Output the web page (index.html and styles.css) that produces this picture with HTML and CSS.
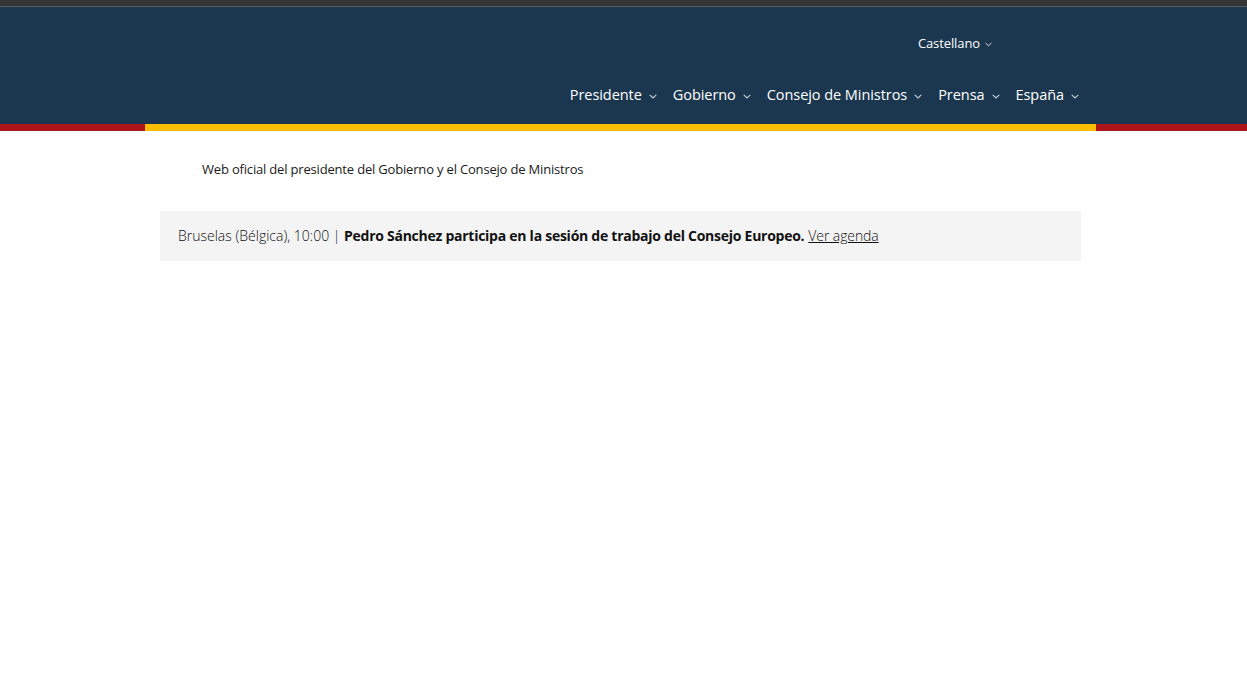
FILE: index.html
```html
<!DOCTYPE html>
<html lang="es">
<head>
<meta charset="utf-8">
<title>La Moncloa</title>
<link rel="stylesheet" href="styles.css">
</head>
<body>
<header class="site-header">
  <div class="topline"></div>
  <div class="navbar">
    <div class="container header-inner">
      <div class="lang">
        <span>Castellano</span>
        <svg class="chev chev-sm" viewBox="0 0 8 5" width="7" height="5"><path d="M0.7 0.8 L4 4 L7.3 0.8" fill="none" stroke="#dfe5ea" stroke-width="1.1"/></svg>
      </div>
      <nav class="mainnav">
        <a class="nav-item">Presidente <svg class="chev" viewBox="0 0 8 5" width="8" height="5"><path d="M0.7 0.8 L4 4 L7.3 0.8" fill="none" stroke="#c8d0d8" stroke-width="1.1"/></svg></a>
        <a class="nav-item">Gobierno <svg class="chev" viewBox="0 0 8 5" width="8" height="5"><path d="M0.7 0.8 L4 4 L7.3 0.8" fill="none" stroke="#c8d0d8" stroke-width="1.1"/></svg></a>
        <a class="nav-item">Consejo de Ministros <svg class="chev" viewBox="0 0 8 5" width="8" height="5"><path d="M0.7 0.8 L4 4 L7.3 0.8" fill="none" stroke="#c8d0d8" stroke-width="1.1"/></svg></a>
        <a class="nav-item">Prensa <svg class="chev" viewBox="0 0 8 5" width="8" height="5"><path d="M0.7 0.8 L4 4 L7.3 0.8" fill="none" stroke="#c8d0d8" stroke-width="1.1"/></svg></a>
        <a class="nav-item">España <svg class="chev" viewBox="0 0 8 5" width="8" height="5"><path d="M0.7 0.8 L4 4 L7.3 0.8" fill="none" stroke="#c8d0d8" stroke-width="1.1"/></svg></a>
      </nav>
    </div>
  </div>
  <div class="flag-stripe">
    <div class="red left"></div>
    <div class="yellow"></div>
    <div class="red right"></div>
  </div>
</header>
<main class="container">
  <p class="tagline">Web oficial del presidente del Gobierno y el Consejo de Ministros</p>
  <div class="agenda-bar">
    <span class="light">Bruselas (Bélgica), 10:00 | </span><strong>Pedro Sánchez participa en la sesión de trabajo del Consejo Europeo.</strong> <a class="agenda-link" href="#">Ver agenda</a>
  </div>
</main>
</body>
</html>
```
FILE: styles.css
```css
* { box-sizing: border-box; }
html, body { margin: 0; padding: 0; background: #fff; }
body { font-family: "Open Sans", "Noto Sans", sans-serif; color: #222; }

.container { width: 921px; margin-left: 160px; }

.topline { height: 7px; background: #353535; border-bottom: 1px solid #5b5b5b; }

.navbar { background: #1b374f; height: 117px; }
.header-inner { display: flex; flex-direction: column; align-items: flex-end; }

.lang {
  display: flex; align-items: center; gap: 5px;
  color: #fff; font-size: 13px; letter-spacing: -0.1px;
  margin-top: 27px; margin-right: 89px; height: 18px;
}
.chev-sm { margin-top: 2px; }

.mainnav { display: flex; margin-top: 33px; margin-right: 2px; }
.nav-item {
  display: flex; align-items: center;
  color: #fff; font-size: 14.5px; letter-spacing: -0.06px; text-decoration: none;
  padding-left: 16px; line-height: 20px;
}
.nav-item:first-child { padding-left: 0; }
.nav-item .chev { margin-left: 7px; margin-top: 2px; }

.flag-stripe { display: flex; height: 7px; }
.flag-stripe .red { background: #ad151a; }
.flag-stripe .left { width: 145px; }
.flag-stripe .yellow { background: #fabd00; width: 951px; }
.flag-stripe .right { flex: 1; }

.tagline {
  margin: 29px 0 0 42px; font-size: 13px; line-height: 18px; letter-spacing: -0.18px;
  color: #1a1a1a; font-weight: 400;
}

.agenda-bar {
  margin-top: 33px; background: #f4f4f4; height: 50px;
  padding: 0 18px 2px; display: flex; align-items: center;
  font-size: 14px; color: #111; white-space: pre;
}
.agenda-bar .light { font-weight: 300; letter-spacing: 0; }
.agenda-bar strong { font-weight: 700; letter-spacing: -0.26px; }
.agenda-link { color: #111; font-weight: 300; letter-spacing: -0.1px; text-decoration: underline; margin-left: 4px; }
```
